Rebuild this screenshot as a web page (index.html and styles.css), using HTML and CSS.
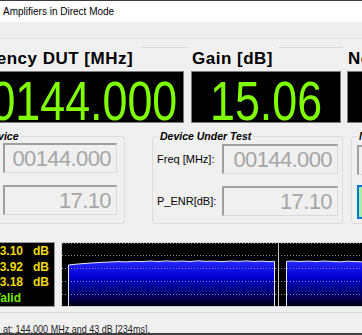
FILE: index.html
```html
<!DOCTYPE html>
<html lang="en">
<head>
<meta charset="utf-8">
<title>Amplifiers in Direct Mode</title>
<link rel="stylesheet" href="styles.css">
</head>
<body>
<div class="window">
  <div class="titlebar">Amplifiers in Direct Mode</div>
  <div class="toolbar"></div>
  <div class="content">
    <div class="displays">
      <div class="disp disp-freq">
        <div class="disp-head"><span class="disp-label label-freq">Frequency DUT [MHz]</span><span class="rule rule-freq"></span></div>
        <div class="disp-box"><span class="disp-val">00144.000</span></div>
      </div>
      <div class="disp disp-gain">
        <div class="disp-head"><span class="disp-label">Gain [dB]</span><span class="rule rule-gain"></span></div>
        <div class="disp-box"><span class="disp-val">15.06</span></div>
      </div>
      <div class="disp disp-nf">
        <div class="disp-head"><span class="disp-label">Noise Figure [dB]</span></div>
        <div class="disp-box"><span class="disp-val">3.18</span></div>
      </div>
    </div>

    <div class="groups">
      <div class="group group-ref">
        <div class="legend">Reference Device</div>
        <div class="grow grow-first"><div class="tb tb-ref">00144.000</div></div>
        <div class="grow grow-second"><div class="tb tb-ref">17.10</div></div>
      </div>
      <div class="group group-dut">
        <div class="legend">Device Under Test</div>
        <div class="grow grow-first-dut"><span class="glabel">Freq [MHz]:</span><div class="tb tb-dut">00144.000</div></div>
        <div class="grow grow-second"><span class="glabel">P_ENR[dB]:</span><div class="tb tb-dut">17.10</div></div>
      </div>
      <div class="group group-src">
        <div class="legend legend-src">Noise Source</div>
        <div class="grow grow-first-src"><div class="tb tb-src">00144.000</div></div>
        <div class="grow grow-btn"><div class="btn-green"></div></div>
      </div>
    </div>

    <div class="bottom">
      <div class="readout">
        <span class="rv">13.10</span><span class="ru">dB</span>
        <span class="rv">13.92</span><span class="ru">dB</span>
        <span class="rv">13.18</span><span class="ru">dB</span>
        <span class="rvalid">Valid</span>
      </div>
      <div class="graph">
        <svg width="320" height="63" viewBox="0 0 320 63" xmlns="http://www.w3.org/2000/svg">
          <defs>
            <linearGradient id="blue" x1="0" y1="17" x2="0" y2="63" gradientUnits="userSpaceOnUse">
              <stop offset="0" stop-color="#2c2cff"/>
              <stop offset="0.35" stop-color="#0000d8"/>
              <stop offset="0.75" stop-color="#00006a"/>
              <stop offset="1" stop-color="#000012"/>
            </linearGradient>
          </defs>
          <path d="M6,63 L6,22 L10,21.6 L16,21 L22,20.5 L28,20.1 L34,19.7 L40,19.3 L48,19 L56,18.6 L64,18.9 L72,18.3 L80,18.6 L88,18 L96,18.5 L104,17.9 L112,18.4 L120,18 L128,18.5 L136,17.8 L144,18.3 L152,18.1 L160,18.6 L168,18 L176,18.4 L184,17.9 L192,18.5 L200,18.1 L208,18.6 L213,18.2 L213,63 Z" fill="url(#blue)"/>
          <path d="M224,63 L224,18.4 L230,18 L238,18.5 L246,18.1 L254,18.6 L262,18 L270,18.4 L278,18.8 L286,18.2 L294,18.6 L302,18.9 L310,18.4 L320,18.8 L320,63 Z" fill="url(#blue)"/>
          <g stroke="#8a8a9a" stroke-width="1" stroke-dasharray="1 2">
            <line x1="0" y1="0.5" x2="320" y2="0.5"/>
            <line x1="0" y1="12.5" x2="320" y2="12.5"/>
            <line x1="0" y1="25.5" x2="320" y2="25.5"/>
            <line x1="0" y1="38.5" x2="320" y2="38.5"/>
            <line x1="0" y1="51.5" x2="320" y2="51.5"/>
          </g>
          <path d="M6.5,63 L6.5,22 L10,21.6 L16,21 L22,20.5 L28,20.1 L34,19.7 L40,19.3 L48,19 L56,18.6 L64,18.9 L72,18.3 L80,18.6 L88,18 L96,18.5 L104,17.9 L112,18.4 L120,18 L128,18.5 L136,17.8 L144,18.3 L152,18.1 L160,18.6 L168,18 L176,18.4 L184,17.9 L192,18.5 L200,18.1 L208,18.6 L212.5,18.2 L212.5,63" fill="none" stroke="#e4e4f4" stroke-width="1"/>
          <path d="M224.5,63 L224.5,18.4 L230,18 L238,18.5 L246,18.1 L254,18.6 L262,18 L270,18.4 L278,18.8 L286,18.2 L294,18.6 L302,18.9 L310,18.4 L320,18.8" fill="none" stroke="#e4e4f4" stroke-width="1"/>
          <line x1="216.5" y1="0" x2="216.5" y2="63" stroke="#c8c8c8" stroke-width="1"/>
        </svg>
      </div>
    </div>
  </div>
  <div class="statusbar"><span class="status-text">at: 144,000 MHz and 43 dB [234ms].</span></div>
</div>
</body>
</html>
```

FILE: styles.css
```css
html, body {
  margin: 0;
  padding: 0;
}
body {
  width: 362px;
  height: 335px;
  overflow: hidden;
  background: #f0f0f0;
  font-family: "Liberation Sans", Arial, sans-serif;
}
.window {
  width: 362px;
  height: 335px;
  box-sizing: border-box;
  border-top: 1px solid #3c3c3c;
  border-bottom: 2px solid #404040;
  display: flex;
  flex-direction: column;
  overflow: hidden;
}
.titlebar {
  height: 21px;
  flex-shrink: 0;
  background: #ffffff;
  padding-left: 3px;
  font-size: 10px;
  line-height: 21px;
  color: #000;
}
.toolbar {
  height: 16px;
  flex-shrink: 0;
  background: #eeeeee;
  border-bottom: 1px solid #dfdfdf;
}
.content {
  height: 273px;
  flex-shrink: 0;
  overflow: hidden;
}

/* big displays */
.displays {
  display: flex;
  margin-left: -62px;
}
.disp {
  flex-shrink: 0;
}
.disp-freq { width: 246px; }
.disp-gain { width: 150px; margin-left: 7px; }
.disp-nf { width: 150px; margin-left: 6px; }
.disp-head {
  height: 32px;
  display: flex;
  align-items: flex-start;
}
.disp-label {
  margin-top: 10px;
  margin-left: 1px;
  font-size: 17px;
  font-weight: bold;
  letter-spacing: 0.5px;
  line-height: 20px;
  white-space: nowrap;
  color: #000;
}
.label-freq { margin-left: 9px; }
.rule {
  flex: 1;
  height: 1px;
  margin-top: 8px;
  background: #d9d9d9;
}
.rule-freq { margin-left: 8px; margin-right: -5px; }
.rule-gain { margin-left: 6px; margin-right: -2px; }
.disp-box {
  height: 52px;
  box-sizing: border-box;
  border: 1px solid #7c7c7c;
  background: #000;
  text-align: center;
  padding-top: 4px;
  overflow: hidden;
}
.disp-val {
  display: inline-block;
  font-size: 56px;
  line-height: 50px;
  color: #80ff00;
  transform: scaleX(0.8);
  white-space: nowrap;
}

/* group boxes */
.groups {
  display: flex;
  margin: 13px 0 0 -77px;
}
.group {
  flex-shrink: 0;
  height: 88px;
  box-sizing: border-box;
  border: 1px solid #dcdcdc;
  border-radius: 3px;
}
.group-ref { width: 202px; }
.group-dut { width: 191px; margin-left: 27px; }
.group-src { width: 150px; margin-left: 8px; }
.legend {
  width: max-content;
  margin: -7px 0 0 5px;
  padding: 0 2px;
  background: #f0f0f0;
  font-size: 10.5px;
  font-weight: bold;
  font-style: italic;
  line-height: 12px;
  color: #000;
}
.grow {
  display: flex;
  align-items: center;
  height: 30px;
}
.grow-first { margin-top: 1px; }
.grow-first-dut { margin-top: 2px; }
.grow-first-src { margin-top: 3px; }
.grow-second { margin-top: 12px; }
.grow-btn { margin-top: 10px; height: 34px; }
.glabel {
  width: 65px;
  margin-left: 4px;
  font-size: 11px;
  color: #000;
  white-space: nowrap;
}
.tb {
  height: 30px;
  box-sizing: border-box;
  border-top: 2px solid #a0a0a0;
  border-left: 2px solid #a0a0a0;
  border-right: 1px solid #dadada;
  border-bottom: 1px solid #dadada;
  background: #f0f0f0;
  text-align: right;
  padding-right: 5px;
  font-size: 22px;
  letter-spacing: -0.6px;
  line-height: 27px;
  color: #a6a6a6;
  white-space: nowrap;
  overflow: hidden;
}
.tb-ref { width: 114px; margin-left: 79px; }
.tb-dut { width: 116px; }
.tb-src { width: 116px; margin-left: 5px; }
.btn-green {
  width: 116px;
  height: 34px;
  margin-left: 5px;
  box-sizing: border-box;
  border: 2px solid #0078d7;
  background: #a8eea0;
}

/* bottom row */
.bottom {
  display: flex;
  height: 65px;
  margin: 18px 0 0 -12px;
}
.readout {
  flex-shrink: 0;
  width: 67px;
  box-sizing: border-box;
  border: 1px solid #9a9a9a;
  background: #000;
  padding: 1px 0 0 4px;
  display: grid;
  grid-template-columns: 30px auto;
  column-gap: 10px;
  align-content: start;
  font-size: 12px;
  font-weight: bold;
  line-height: 15.6px;
  white-space: nowrap;
}
.rv { text-align: right; color: #f0d800; }
.ru { color: #f0d800; }
.rvalid { grid-column: 1 / -1; color: #74e800; }
.graph {
  flex: 0 0 320px;
  margin-left: 6px;
  height: 65px;
  box-sizing: border-box;
  border: 1px solid #d2d2d2;
  background: #000;
  overflow: hidden;
}
.graph svg {
  display: block;
}

/* status bar */
.statusbar {
  height: 21px;
  flex-shrink: 0;
  box-sizing: border-box;
  border-top: 1px solid #dadada;
  padding: 6px 0 0 3px;
  overflow: hidden;
}
.status-text {
  display: inline-block;
  font-size: 11px;
  line-height: 14px;
  color: #1e1e1e;
  white-space: nowrap;
  transform: scaleX(0.82);
  transform-origin: left center;
}
```
